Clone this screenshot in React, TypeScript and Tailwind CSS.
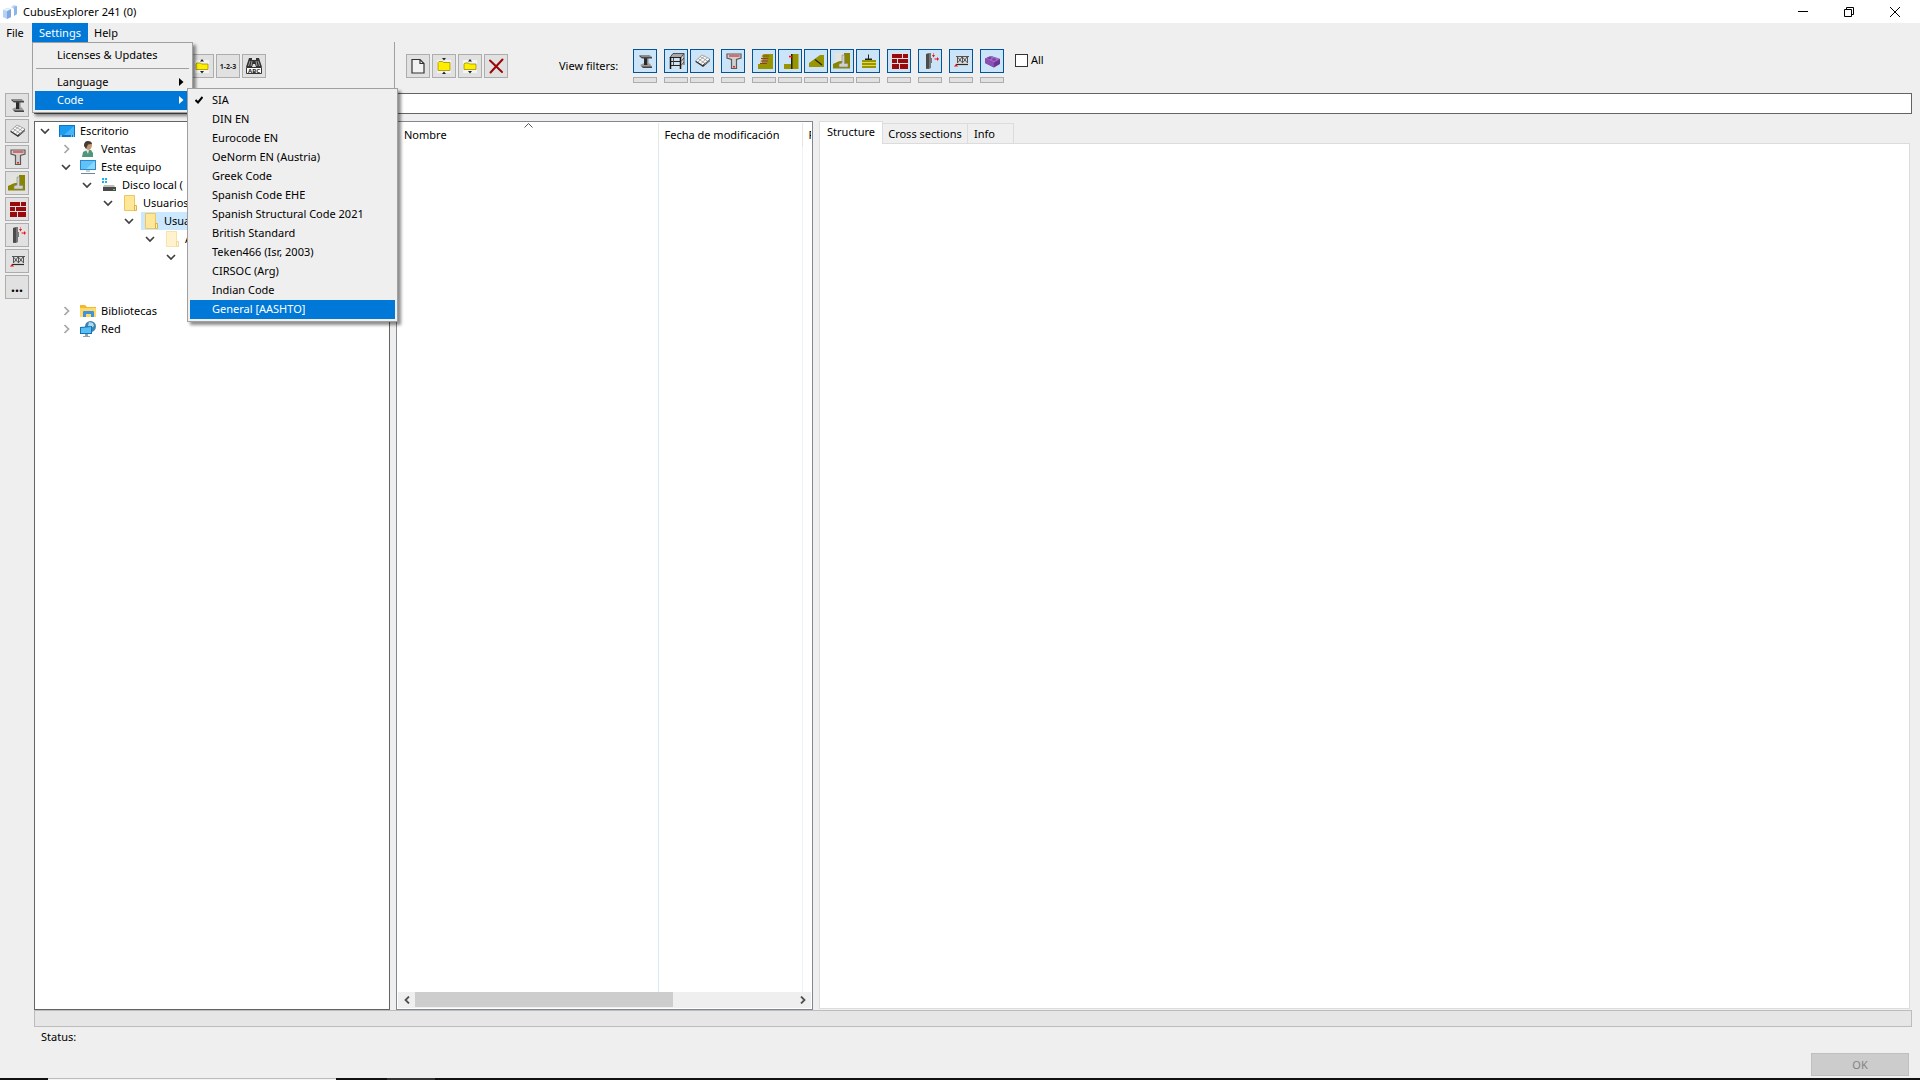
import React, { useState } from 'react';

const CODES = [
  'SIA',
  'DIN EN',
  'Eurocode EN',
  'OeNorm EN (Austria)',
  'Greek Code',
  'Spanish Code EHE',
  'Spanish Structural Code 2021',
  'British Standard',
  'Teken466 (Isr, 2003)',
  'CIRSOC (Arg)',
  'Indian Code',
  'General [AASHTO]',
];

// 22x22 drawing area, fits inside a 24px button with 1px border
const Glyph: React.FC<{ children: React.ReactNode }> = ({ children }) => (
  <svg viewBox="0 0 22 22" className="block size-[22px]" aria-hidden="true">
    {children}
  </svg>
);

const BeamIcon = () => (
  <Glyph>
    <path d="M6 15l3-1.500h7l2 3.500-9 .5z" fill="#9a9a9a" />
    <path d="M7 16l2 2h9v-1.500H9.500z" fill="#444" />
    <path d="M10 7h4v7l-1 1h-3z" fill="#2a2a2a" />
    <path d="M13 8h1.500v5.500L13 15z" fill="#8a8a8a" />
    <path d="M5.500 5h10l2.500 2H8z" fill="#8c8c8c" />
    <path d="M5.500 5v1.500L8 8.500h10V7H8z" fill="#484848" />
  </Glyph>
);

const BuildingIcon = () => (
  <Glyph>
    <path d="M5 7.500L8 3.500h11L16 7.500z" fill="#a8a8a8" />
    <path d="M5 11.500l2-1.500h9v1.500zM5 15.500l2-1.500h9v1.500z" fill="#ddd" />
    <path d="M16 7.500l3-4V15l-3 4z" fill="#d8d8d8" />
    <path d="M5 7.500L8 3.500h11L16 7.500z" fill="none" stroke="#333" strokeWidth="0.800" />
    <path d="M5 7.500h11M5 11.500h11M5 15.500h11" stroke="#222" strokeWidth="1.200" />
    <path d="M5.500 7v12M15.500 7v12" stroke="#111" strokeWidth="1.500" />
    <path d="M19 3.500V15M16 11.500l3-3.500M16 15.500l3-3.500M8.500 8v7" fill="none" stroke="#444" strokeWidth="0.900" />
  </Glyph>
);

const SlabIcon = () => (
  <Glyph>
    <path d="M5 10.500l6-5.500 8 4-7 6.500z" fill="#fafafa" />
    <path
      d="M5 10.500l6-5.500 8 4M7 8.500l7 5M9 6.500l7.500 4.500M13.500 6L7 12M16.500 7.500L9.500 14"
      fill="none"
      stroke="#8a8a8a"
      strokeWidth="0.700"
    />
    <path d="M4.500 10.500l7 4.500 7.500-6v2L12 17l-7.500-5z" fill="#333" />
    <path d="M13.500 14.500L19 10" stroke="#bbb" strokeWidth="0.700" />
  </Glyph>
);

const TSectionIcon = () => (
  <Glyph>
    <path d="M5 4h14v4l-4.500 1.500V18.500H9.500V9.500L5 8z" fill="#cfcfcf" stroke="#5a5a5a" strokeWidth="1.200" />
    <path d="M7 6h10.500" stroke="#f02020" strokeWidth="1.200" />
    <path d="M11 16h2v1.500h-2z" fill="#f02020" />
  </Glyph>
);

const NailedWallIcon = () => (
  <Glyph>
    <path d="M5 14h2l2.500-10H20v15H5z" fill="#999500" />
    <path d="M7 14L9 4h1.500L8.500 14z" fill="#ddd69a" />
    <path d="M9 6h7M8 8.500h7.500M8 11h7M7 13.500h7" stroke="#8c3a50" strokeWidth="1" />
  </Glyph>
);

const SheetPileIcon = () => (
  <Glyph>
    <path d="M5 14h7v5H5zM13 4h6.500v15H13z" fill="#999500" />
    <path d="M12 4h1.500v15H12z" fill="#222" />
    <path d="M10 6h3v1.500h-3z" fill="#e11" />
    <path d="M10 5h2v1h-2zM10 7.500h2v1h-2z" fill="#e8b0a8" />
  </Glyph>
);

const SlopeIcon = () => (
  <Glyph>
    <path d="M4 17v-4L15 5h4v12z" fill="#999500" />
    <path d="M10 9.500l7 5.500" stroke="#222" strokeWidth="1.300" />
  </Glyph>
);

const RetainingWallIcon = () => (
  <Glyph>
    <path d="M2 18.500V14l4-2 3-1V7l4-4h6v15.500z" fill="#888500" />
    <path d="M4 3h9v3h-2v5H7l-3 2z" fill="#e4e4dc" />
    <path d="M11 5h2.500v8.500H17V17H8v-3l3-1z" fill="#d0d0d0" stroke="#888" strokeWidth="0.600" />
  </Glyph>
);

const FootingIcon = () => (
  <Glyph>
    <path d="M5 10h14v8H5z" fill="#999500" />
    <path d="M5 12.500h14M5 15.500h14" stroke="#e2d94e" strokeWidth="1" />
    <path d="M11 4.500h1v4h-1zM8 8.500h7V10H8z" fill="#222" />
  </Glyph>
);

const BrickIcon = () => (
  <Glyph>
    <path d="M3 3h17v16H3z" fill="#e8dede" />
    <path d="M4 4h10v4H4zM15 4h5v4h-5zM4 9h5v4H4zM10 9h10v4H10zM4 14h7v5H4zM12 14h8v5h-8z" fill="#970b0e" />
  </Glyph>
);

const PierIcon = () => (
  <Glyph>
    <path d="M7 4l2-1h3v5h1v5h-1v5l-2 1H7z" fill="#777" />
    <path d="M7 4h3v14.500H7z" fill="#4b4b4b" />
    <path d="M14.500 3v2h-1.500l1.500 2.500L16 5h-1V3zM15.500 8.500h2.500V7l2 2-2 2V9.500h-2.500z" fill="#e11" />
  </Glyph>
);

const TrussIcon = () => (
  <Glyph>
    <path d="M6 6h12v9H6z" fill="#dedede" />
    <path
      d="M6 6.500h13M7.500 7v6M12.500 7v6M17.500 7v6M12 7L8 12.500M8 7.500l4 5M17 7l-4 5.500M13 7.500l4 5"
      fill="none"
      stroke="#444"
      strokeWidth="0.900"
    />
    <path d="M6 14.500h12" stroke="#2c2c2c" strokeWidth="1.200" />
    <path d="M4 16.500l2-2.500 2 2.500z" fill="#e11" />
  </Glyph>
);

const BlockIcon = () => (
  <Glyph>
    <path d="M4 8.500L10 6l9 3v5l-6 3.500L4 13z" fill="#6a3492" />
    <path d="M4 8.500L10 6l9 3-6 3.500z" fill="#a26ac8" />
    <path d="M4 8.500l9 4v5L4 13z" fill="#8a51b3" />
    <ellipse cx="8.500" cy="8" rx="2" ry="1.200" fill="#7b45a2" />
    <ellipse cx="13" cy="9.500" rx="2" ry="1.200" fill="#7b45a2" />
  </Glyph>
);

const PageIcon = () => (
  <Glyph>
    <path d="M5 4.500h8l4 4v9.500H5z" fill="#f3f3f3" stroke="#333" strokeWidth="1.200" />
    <path d="M13 4.500v4h4" fill="none" stroke="#333" strokeWidth="1.200" />
  </Glyph>
);

const FolderExpandIcon = () => (
  <Glyph>
    <path d="M4 5h14v13H4z" fill="#f3f3f3" />
    <path d="M9 3h4l-2 2.500zM9 19h4l-2-2.500z" fill="#222" />
    <path d="M5 7.500l1-1h3.500l1 1H17v8H5z" fill="#ffee00" stroke="#999100" strokeWidth="0.800" />
  </Glyph>
);

const FolderCollapseIcon = () => (
  <Glyph>
    <path d="M4 5h14v13H4z" fill="#f3f3f3" />
    <path d="M9 6.500h4L11 4zM9 16h4l-2 2.500z" fill="#222" />
    <path d="M5 9l1-1h3.500l1 1H17v5.500H5z" fill="#ffee00" stroke="#999100" strokeWidth="0.800" />
  </Glyph>
);

const DeleteIcon = () => (
  <Glyph>
    <path d="M5 5.500L17 17M17.500 4.500L5.500 17.500" stroke="#990808" strokeWidth="2" strokeLinecap="round" />
  </Glyph>
);

const RenumberIcon = () => (
  <Glyph>
    <text x="11" y="14" textAnchor="middle" fontSize="7" fontWeight="700" fill="#222">
      1-2-3
    </text>
  </Glyph>
);

const FindIcon = () => (
  <Glyph>
    <path d="M6 3h3v2h4V3h3l3 9h-6l-1-3h-2l-1 3H3z" fill="#333" />
    <path d="M7 6l-1.500 5M9 6l-1 5M15 6l1.500 5M13 6l1 5" stroke="#ccc" strokeWidth="0.700" />
    <path d="M3.500 12.500h15v6h-15z" fill="#fff" stroke="#333" />
    <text x="11" y="18" textAnchor="middle" fontSize="6" fontWeight="700" fill="#222">
      ABC
    </text>
  </Glyph>
);

const ToolButton: React.FC<{ label: string; children: React.ReactNode }> = ({ label, children }) => (
  <button
    type="button"
    aria-label={label}
    className="flex size-6 shrink-0 items-center justify-center border border-[#adadad] bg-[#e1e1e1]"
  >
    {children}
  </button>
);

const FilterButton: React.FC<{ label: string; children: React.ReactNode }> = ({ label, children }) => (
  <div className="flex flex-col gap-1">
    <button type="button" aria-pressed="true" aria-label={label} className="size-6 border border-[#005499] bg-[#cce4f7]">
      {children}
    </button>
    <button type="button" aria-label={`${label} options`} className="h-1.5 w-6 border border-[#adadad] bg-[#e1e1e1]" />
  </div>
);

const FILTER_GROUPS: [string, React.FC][][] = [
  [['Beam', BeamIcon]],
  [['Building', BuildingIcon], ['Slab', SlabIcon]],
  [['Cross section', TSectionIcon]],
  [
    ['Nailed wall', NailedWallIcon],
    ['Sheet pile', SheetPileIcon],
    ['Slope', SlopeIcon],
    ['Retaining wall', RetainingWallIcon],
    ['Footing', FootingIcon],
  ],
  [['Masonry', BrickIcon]],
  [['Pier', PierIcon]],
  [['Truss', TrussIcon]],
  [['Block', BlockIcon]],
];

const SIDE_TOOLS: [string, React.FC][] = [
  ['Beam', BeamIcon],
  ['Slab', SlabIcon],
  ['Cross section', TSectionIcon],
  ['Retaining wall', RetainingWallIcon],
  ['Masonry', BrickIcon],
  ['Pier', PierIcon],
  ['Truss', TrussIcon],
];

const DesktopIcon = () => (
  <svg viewBox="0 0 16 16" className="size-4" aria-hidden="true">
    <path d="M0 2h16v12H0z" fill="#0a76c8" />
    <path d="M1 3h14v9H1z" fill="#1e9cf0" />
    <path d="M15 3v9H5z" fill="#48b4fa" />
    <path d="M1 13h2M12 13h1M14 13h1" stroke="#fff" />
  </svg>
);

const UserIcon = () => (
  <svg viewBox="0 0 16 16" className="size-4" aria-hidden="true">
    <path d="M2 16l1-5 4-2h4l2 3v4z" fill="#4d9878" />
    <path d="M6 9h3l-1 4z" fill="#e8e8e8" />
    <path d="M5 4a3.500 3.500 0 017 0c0 3-2 5-3.500 5S5 7 5 4z" fill="#c49a77" />
    <path d="M4 5c0-4 2-5 4-5s4 1 4 3l-4 .5L6 8z" fill="#4a3a30" />
  </svg>
);

const ComputerIcon = () => (
  <svg viewBox="0 0 16 16" className="size-4" aria-hidden="true">
    <path d="M0 1h16v10H0z" fill="#2f88c8" />
    <path d="M1 2h14v8H1z" fill="#5fc3fb" />
    <path d="M15 2v8H6z" fill="#8ad7ff" />
    <path d="M6 11h4v2H6z" fill="#c4d2de" />
    <path d="M1 14h14v1H1z" fill="#6f8799" />
  </svg>
);

const DiskIcon = () => (
  <svg viewBox="0 0 16 16" className="size-4" aria-hidden="true">
    <path d="M1 1h2v2H1zM4 1h2v2H4zM1 4h2v2H1zM4 4h2v2H4z" fill="#1cb4e8" />
    <path d="M3 8h10l1 2H2z" fill="#bdbdbd" />
    <path d="M2 10h13v4H2z" fill="#4a4a4a" />
    <path d="M12 12h2v1h-2z" fill="#4fe04f" />
  </svg>
);

const FolderIcon = () => (
  <svg viewBox="0 0 16 16" className="size-4" aria-hidden="true">
    <path d="M2.500.5h10v15h-10z" fill="#ffe79a" stroke="#edc65c" />
    <path d="M12.500 10.500h2v5h-2z" fill="#fff0ba" stroke="#e0b040" />
  </svg>
);

const LibraryIcon = () => (
  <svg viewBox="0 0 16 16" className="size-4" aria-hidden="true">
    <path d="M0 2h5l2 2h9v10H0z" fill="#f2b832" />
    <path d="M0 5h16v9H0z" fill="#ffd868" />
    <path d="M3 14V9q0-1 1-1h9q1 0 1 1v5h-3v-3H6v3z" fill="#3c94dc" />
  </svg>
);

const NetworkIcon = () => (
  <svg viewBox="0 0 16 16" className="size-4" aria-hidden="true">
    <circle cx="10.500" cy="5.500" r="5.500" fill="#3f87b0" />
    <path d="M9 1l4 1 1 3-3 2-3-2z" fill="#b4d8ea" />
    <path d="M0 6l12-1v8H0z" fill="#1673b8" />
    <path d="M1 7l10-1v6H1z" fill="#58bff5" />
    <path d="M5 13h3v2H5zM3 15h7v1H3z" fill="#8fa3b3" />
  </svg>
);

const TreeChevron: React.FC<{ open: boolean }> = ({ open }) => (
  <svg viewBox="0 0 10 10" className="size-[10px] shrink-0" fill="none" strokeWidth="1.700" aria-hidden="true">
    {open ? <path d="M1 3l4 4 4-4" stroke="#404040" /> : <path d="M3.500 1l4 4-4 4" stroke="#a6a6a6" />}
  </svg>
);

type TreeNode = {
  label: string;
  indent: string;
  open: boolean;
  Icon?: React.FC;
  selected?: boolean;
  faded?: boolean;
};

const TREE: TreeNode[] = [
  { label: 'Escritorio', indent: 'pl-[5px]', open: true, Icon: DesktopIcon },
  { label: 'Ventas', indent: 'pl-[26px]', open: false, Icon: UserIcon },
  { label: 'Este equipo', indent: 'pl-[26px]', open: true, Icon: ComputerIcon },
  { label: 'Disco local (', indent: 'pl-[47px]', open: true, Icon: DiskIcon },
  { label: 'Usuarios', indent: 'pl-[68px]', open: true, Icon: FolderIcon },
  { label: 'Usua', indent: 'pl-[89px]', open: true, Icon: FolderIcon, selected: true },
  { label: 'A', indent: 'pl-[110px]', open: true, Icon: FolderIcon, faded: true },
  { label: '', indent: 'pl-[131px]', open: true },
];

const TREE_BOTTOM: TreeNode[] = [
  { label: 'Bibliotecas', indent: 'pl-[26px]', open: false, Icon: LibraryIcon },
  { label: 'Red', indent: 'pl-[26px]', open: false, Icon: NetworkIcon },
];

const TreeRow: React.FC<{ node: TreeNode }> = ({ node }) => {
  const { label, indent, open, Icon, selected, faded } = node;
  return (
    <li className={`flex h-[18px] items-center ${indent}`}>
      <TreeChevron open={open} />
      {Icon && (
        <span className={`ml-[7px] flex h-[18px] items-center gap-[5px] px-0.5 whitespace-nowrap ${selected ? 'bg-[#cce8ff]' : ''}`}>
          <span className={faded ? 'opacity-50' : ''}>
            <Icon />
          </span>
          {label}
        </span>
      )}
    </li>
  );
};

const MenuArrow = () => (
  <svg viewBox="0 0 5 8" className="h-2 w-[5px]" fill="currentColor" aria-hidden="true">
    <path d="M0 0l4.500 4L0 8z" />
  </svg>
);

const TitleBar = () => (
  <header className="flex h-[23px] shrink-0 items-center bg-white pr-0.5">
    <svg viewBox="0 0 16 16" className="mr-1 ml-[3px] size-4" aria-hidden="true">
      <path d="M0 6l4-2 4 1v8l-4 2-4-2z" fill="#b4d2f4" />
      <path d="M4 7l4-2v8l-4 2z" fill="#7da9e2" />
      <path d="M0 6l4-2 4 1-4 2z" fill="#e2effc" />
      <path d="M8 3l3-2 3 1v8l-3 2V5z" fill="#bcd5f4" />
      <path d="M11 3l3-1v8l-3 2z" fill="#8db4ec" />
    </svg>
    <h1>CubusExplorer 241 (0)</h1>
    <div className="ml-auto flex">
      <button type="button" aria-label="Minimize" className="flex h-[23px] w-[46px] items-center justify-center">
        <svg viewBox="0 0 10 10" className="size-[10px]" stroke="#000">
          <path d="M0 4.500h10" />
        </svg>
      </button>
      <button type="button" aria-label="Restore" className="flex h-[23px] w-[46px] items-center justify-center">
        <svg viewBox="0 0 10 10" className="size-[10px]" fill="none" stroke="#000">
          <path d="M.5 2.500h7v7h-7zM2.500 2.500v-2h7v7h-2" />
        </svg>
      </button>
      <button type="button" aria-label="Close" className="flex h-[23px] w-[46px] items-center justify-center">
        <svg viewBox="0 0 10 10" className="size-[10px]" stroke="#000">
          <path d="M0 0l10 10M10 0L0 10" />
        </svg>
      </button>
    </div>
  </header>
);

const CodeMenu: React.FC<{ code: string; onSelect: (code: string) => void }> = ({ code, onSelect }) => (
  <div
    role="menu"
    className="absolute -top-[3px] left-[152px] z-20 w-[211px] border border-[#a0a0a0] bg-[#efefef] p-0.5 text-black shadow-[3px_3px_3px_rgba(0,0,0,0.45)]"
  >
    {CODES.map((name, i) => (
      <button
        key={name}
        type="button"
        role="menuitemradio"
        aria-checked={name === code}
        onClick={() => onSelect(name)}
        className={`flex h-[19px] w-full items-center pb-px text-left ${i === CODES.length - 1 ? 'bg-[#0078d7] text-white' : ''}`}
      >
        <span className="flex w-[22px] justify-center">
          {name === code && (
            <svg viewBox="0 0 8 8" className="-ml-1 size-2" fill="none" stroke="#000" strokeWidth="2" aria-hidden="true">
              <path d="M.5 4l2.500 2.500L7.500 1" />
            </svg>
          )}
        </span>
        {name}
      </button>
    ))}
  </div>
);

const SettingsMenu: React.FC<{ code: string; onSelect: (code: string) => void }> = ({ code, onSelect }) => (
  <div
    role="menu"
    className="absolute top-full left-0 z-10 w-[161px] border border-[#a0a0a0] bg-[#efefef] p-0.5 text-black shadow-[3px_3px_3px_rgba(0,0,0,0.45)]"
  >
    <button type="button" role="menuitem" className="flex h-[22px] w-full items-center pb-0.5 pl-[22px]">
      Licenses &amp; Updates
    </button>
    <div className="mx-px mt-px border-t border-[#a0a0a0]" />
    <button type="button" role="menuitem" className="mt-1 flex h-[18px] w-full items-center justify-between pr-1.5 pb-px pl-[22px]">
      Language
      <MenuArrow />
    </button>
    <div className="relative">
      <button
        type="button"
        role="menuitem"
        aria-haspopup="menu"
        className="flex h-[19px] w-full items-center justify-between bg-[#0078d7] pr-1.5 pb-px pl-[22px] text-white"
      >
        Code
        <MenuArrow />
      </button>
      <CodeMenu code={code} onSelect={onSelect} />
    </div>
  </div>
);

const Toolbar = () => (
  <div className="flex h-[51px] shrink-0">
    <div className="flex w-[395px] gap-0.5 border-r border-[#a0a0a0] pt-3 pl-[190px]">
      <ToolButton label="Collapse folder">
        <FolderCollapseIcon />
      </ToolButton>
      <ToolButton label="Renumber">
        <RenumberIcon />
      </ToolButton>
      <ToolButton label="Find">
        <FindIcon />
      </ToolButton>
    </div>
    <div className="flex gap-0.5 pt-3 pl-[11px]">
      <ToolButton label="New file">
        <PageIcon />
      </ToolButton>
      <ToolButton label="Expand folder">
        <FolderExpandIcon />
      </ToolButton>
      <ToolButton label="Collapse">
        <FolderCollapseIcon />
      </ToolButton>
      <ToolButton label="Delete">
        <DeleteIcon />
      </ToolButton>
    </div>
    <span className="w-[125px] pt-[15px] pl-[51px] whitespace-nowrap">View filters:</span>
    <div className="flex gap-[7px] pt-[7px]">
      {FILTER_GROUPS.map((group, i) => (
        <div key={i} className="flex gap-0.5">
          {group.map(([label, Icon]) => (
            <FilterButton key={label} label={label}>
              <Icon />
            </FilterButton>
          ))}
        </div>
      ))}
    </div>
    <label className="ml-[11px] flex h-9 items-center gap-[3px] self-start">
      <input type="checkbox" className="size-[13px] appearance-none border border-[#333] bg-white" />
      All
    </label>
  </div>
);

const FileList = () => (
  <section className="flex w-[417px] shrink-0 flex-col border border-[#828790] bg-white px-px pt-px pb-px">
    <table className="w-full flex-1 table-fixed">
      <thead>
        <tr className="h-6 text-left align-top">
          <th className="relative w-[260px] border-r border-[#e5e5e5] pt-[3px] pl-1.5 font-normal">
            <svg viewBox="0 0 9 5" className="absolute top-0 left-[126px] h-[5px] w-[9px]" fill="none" stroke="#555" aria-hidden="true">
              <path d="M.5 4.500l4-4 4 4" />
            </svg>
            Nombre
          </th>
          <th className="w-36 border-r border-[#e5e5e5] pt-[3px] pl-1.5 font-normal whitespace-nowrap">Fecha de modificación</th>
          <th className="overflow-hidden pt-[3px] pl-1.5 font-normal">P</th>
        </tr>
      </thead>
      <tbody>
        <tr>
          <td className="border-r border-[#d8e9f8]" />
          <td className="border-r border-[#e8f3fc]" />
          <td />
        </tr>
      </tbody>
    </table>
    <div className="flex h-4 items-center bg-[#efefef]">
      <button type="button" aria-label="Scroll left" className="flex h-4 w-[17px] items-center justify-center">
        <svg viewBox="0 0 6 8" className="h-2 w-1.5" fill="none" stroke="#505050" strokeWidth="1.800">
          <path d="M5 .5L1.500 4 5 7.500" />
        </svg>
      </button>
      <div className="h-full flex-1">
        <div className="h-[15px] w-[68%] bg-[#cdcdcd]" />
      </div>
      <button type="button" aria-label="Scroll right" className="flex h-4 w-[17px] items-center justify-center">
        <svg viewBox="0 0 6 8" className="h-2 w-1.5" fill="none" stroke="#505050" strokeWidth="1.800">
          <path d="M1 .5L4.500 4 1 7.500" />
        </svg>
      </button>
    </div>
  </section>
);

const Details = () => (
  <section className="mr-0.5 mb-px flex min-w-0 flex-1 flex-col">
    <div role="tablist" className="flex h-[22px] items-end">
      <button
        type="button"
        role="tab"
        aria-selected="true"
        className="z-10 -mb-px h-[23px] w-16 border border-b-0 border-[#dcdcdc] bg-white pb-0.5"
      >
        Structure
      </button>
      <button type="button" role="tab" aria-selected="false" className="-ml-px h-5 w-[86px] border border-b-0 border-[#dcdcdc] whitespace-nowrap">
        Cross sections
      </button>
      <button
        type="button"
        role="tab"
        aria-selected="false"
        className="-ml-px h-5 w-[47px] border border-b-0 border-[#dcdcdc] pl-1.5 text-left"
      >
        Info
      </button>
    </div>
    <div role="tabpanel" className="flex-1 border border-[#dcdcdc] bg-white" />
  </section>
);

const App: React.FC = () => {
  const [code, setCode] = useState('SIA');
  const [path, setPath] = useState('');

  return (
    <div className="flex h-screen flex-col bg-[#efefef] font-['Noto_Sans','Open_Sans',sans-serif] text-[11px] leading-[18px] text-black">
      <TitleBar />

      <nav className="flex h-[19px] shrink-0">
        <button type="button" className="w-8 pr-0.5">
          File
        </button>
        <div className="relative">
          <button type="button" aria-haspopup="menu" aria-expanded="true" className="block h-[19px] w-14 bg-[#0078d7] text-white">
            Settings
          </button>
          <SettingsMenu code={code} onSelect={setCode} />
        </div>
        <button type="button" className="px-1.5">
          Help
        </button>
      </nav>

      <Toolbar />

      <main className="flex min-h-0 flex-1 pr-2">
        <aside className="flex w-[34px] shrink-0 flex-col gap-0.5 pl-[5px]">
          {SIDE_TOOLS.map(([label, Icon]) => (
            <ToolButton key={label} label={label}>
              <Icon />
            </ToolButton>
          ))}
          <ToolButton label="More">
            <span className="text-sm font-bold">...</span>
          </ToolButton>
        </aside>

        <div className="flex min-w-0 flex-1 flex-col">
          <input
            type="text"
            aria-label="Path"
            value={path}
            onChange={(e) => setPath(e.target.value)}
            className="mb-[7px] h-[21px] shrink-0 border border-[#646464] bg-white px-1 outline-none"
          />

          <div className="flex min-h-0 flex-1 gap-1.5">
            <section className="w-[356px] shrink-0 border border-[#646464] bg-white">
              <ul>
                {TREE.map((node, i) => (
                  <TreeRow key={i} node={node} />
                ))}
              </ul>
              <ul className="mt-9">
                {TREE_BOTTOM.map((node) => (
                  <TreeRow key={node.label} node={node} />
                ))}
              </ul>
            </section>
            <FileList />
            <Details />
          </div>

          <div className="h-[17px] shrink-0 border border-[#bcbcbc] bg-[#e6e6e6]" />
        </div>
      </main>

      <footer className="flex h-[51px] shrink-0 items-end justify-between pr-[11px] pb-0.5 pl-[41px]">
        <span className="self-start pt-px">Status:</span>
        <button type="button" disabled className="h-[23px] w-[98px] border border-[#bfbfbf] bg-[#cccccc] text-[#838383]">
          OK
        </button>
      </footer>

      {/* top edge of the taskbar */}
      <div className="flex h-0.5 shrink-0 bg-[#111]">
        <div className="ml-12 w-72 border-t border-[#bcbcbc] bg-[#f4f4f4]" />
        <div className="ml-[51px] w-12 bg-[#333]" />
      </div>
    </div>
  );
};

export default App;
